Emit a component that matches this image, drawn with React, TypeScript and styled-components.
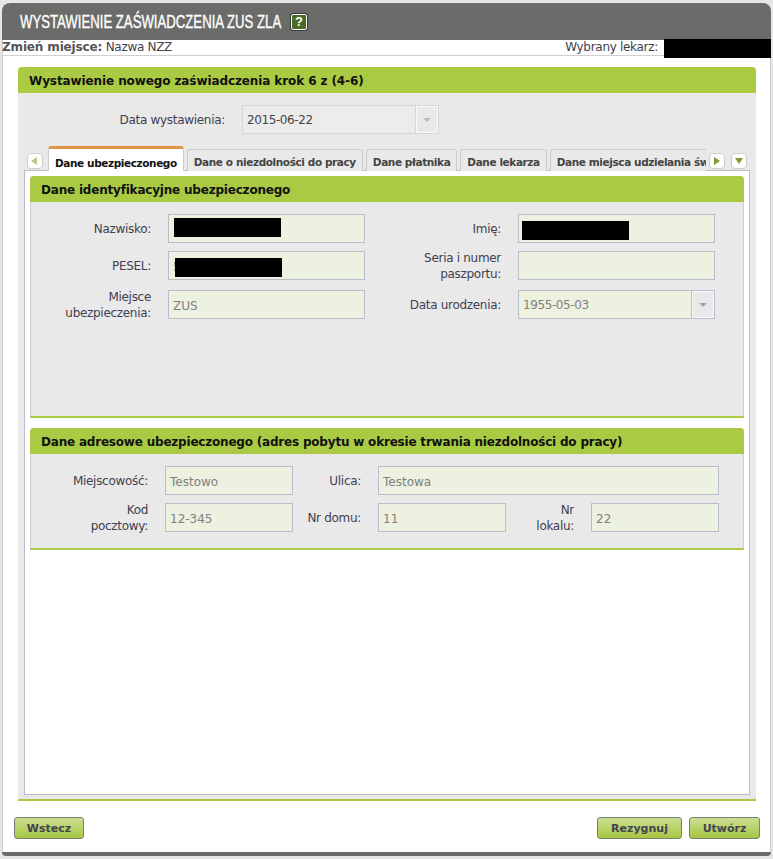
import React from "react";
import styled, { createGlobalStyle } from "styled-components";

const GlobalStyle = createGlobalStyle`
  html, body {
    margin: 0;
    padding: 0;
    background: #e6e6e6;
    font-family: "DejaVu Sans", Verdana, sans-serif;
    font-size: 12px;
    letter-spacing: -0.3px;
    color: #3f3f4f;
  }
`;

const Window = styled.div`
  box-sizing: border-box;
  width: 769px;
  height: 853px;
  margin: 3px 2px 3px 2px;
  background: #fff;
  border-left: 1px solid #cfcfcf;
  border-right: 1px solid #cfcfcf;
  border-radius: 8px 8px 6px 6px;
  display: flex;
  flex-direction: column;
  position: relative;
`;

const TitleBar = styled.div`
  height: 37px;
  margin: 0 -1px;
  background: #6b6c6a;
  border-radius: 8px 8px 0 0;
  display: flex;
  align-items: center;
  padding-left: 18px;
`;

const Title = styled.h1`
  margin: 0;
  width: 261px;
  white-space: nowrap;
  font-family: "Liberation Sans", Arial, sans-serif;
  font-size: 19px;
  font-weight: 400;
  letter-spacing: 0;
  color: #fff;
  display: inline-block;
  -webkit-text-stroke: 0.4px #fff;
  transform: scaleX(0.693);
  transform-origin: left center;
`;

const HelpIcon = styled.span`
  box-sizing: border-box;
  width: 16px;
  height: 16px;
  margin: 1px 0 0 10px;
  background: #4a6b24;
  border: 1px solid #fff;
  border-radius: 2px;
  box-shadow: 0 0 0 1px #3a3a3a;
  color: #fff;
  font-family: "Liberation Sans", Arial, sans-serif;
  font-weight: 700;
  font-size: 13px;
  letter-spacing: 0;
  line-height: 14px;
  text-align: center;
`;

const PlaceBar = styled.div`
  height: 15px;
  margin-left: -1px;
  border-bottom: 1px solid #cfcfcf;
  display: flex;
  justify-content: space-between;
  line-height: 15px;
  white-space: nowrap;
`;

const PlaceLabel = styled.b`
  letter-spacing: -0.15px;
  color: #555;
`;

const DoctorLabel = styled.span`
  margin-right: 107px;
  padding-right: 5px;
`;

const Redaction = styled.div<{ $left: number; $top: number; $height: number }>`
  position: absolute;
  left: ${(p) => p.$left}px;
  top: ${(p) => p.$top}px;
  width: 107px;
  height: ${(p) => p.$height}px;
  background: #000;
`;

const Main = styled.div`
  padding: 11px 11px 0 15px;
`;

const StepPanel = styled.section`
  box-sizing: border-box;
  width: 738px;
  height: 734px;
  background: #e9e9e9;
  border-bottom: 2px solid #aaca44;
  border-radius: 4px 4px 0 0;
`;

const PanelHeader = styled.h2`
  margin: 0;
  height: 26px;
  padding-left: 11px;
  background: #aaca44;
  border-radius: 4px 4px 0 0;
  color: #111;
  font-size: 12px;
  font-weight: 700;
  letter-spacing: -0.1px;
  line-height: 29px;
  white-space: nowrap;
`;

const DateRow = styled.div`
  display: flex;
  padding-top: 12px;
  height: 29px;
`;

const DateLabel = styled.label`
  width: 224px;
  padding-right: 17px;
  box-sizing: border-box;
  text-align: right;
  line-height: 31px;
`;

const Select = styled.div<{ $filled?: boolean; $width: number }>`
  box-sizing: border-box;
  width: ${(p) => p.$width}px;
  height: 29px;
  display: flex;
  background: ${(p) => (p.$filled ? "#edf1e0" : "#ececec")};
  border: 1px solid ${(p) => (p.$filled ? "#b8bccb" : "#d6d6d6")};
  color: ${(p) => (p.$filled ? "#808080" : "#444")};
`;

const SelectValue = styled.span`
  flex: 1;
  padding-left: 4px;
  letter-spacing: -0.4px;
  line-height: 29px;
`;

const SelectButton = styled.span<{ $filled?: boolean }>`
  box-sizing: border-box;
  width: 23px;
  background: #e9e9e9;
  border-left: 1px solid ${(p) => (p.$filled ? "#b8bccb" : "#d6d6d6")};
  box-shadow: inset 0 0 0 1px #f8f8f8;
  display: flex;
  align-items: center;
  justify-content: center;
`;

const TabStrip = styled.div`
  display: flex;
  align-items: flex-start;
  height: 25px;
  margin: 12px 0 -1px 9px;
  position: relative;
  z-index: 1;
`;

const ArrowButton = styled.button<{ $gap: number }>`
  box-sizing: border-box;
  width: 16px;
  height: 16px;
  margin: 7px 0 0 ${(p) => p.$gap}px;
  padding: 0;
  background: #fff;
  border: 1px solid #ccc;
  border-radius: 4px;
  display: flex;
  align-items: center;
  justify-content: center;
`;

const TabViewport = styled.div`
  width: 658px;
  height: 25px;
  margin-left: 5px;
  overflow: hidden;
  display: flex;
  align-items: flex-start;
  gap: 3px;
`;

const Tab = styled.div<{ $active?: boolean }>`
  box-sizing: border-box;
  flex: none;
  font-size: 10.5px;
  font-weight: 700;
  letter-spacing: -0.4px;
  white-space: nowrap;
  padding: 0 6px;
  border-radius: 3px 3px 0 0;
  margin-top: ${(p) => (p.$active ? 0 : 3)}px;
  height: ${(p) => (p.$active ? 25 : 22)}px;
  line-height: ${(p) => (p.$active ? 28 : 24)}px;
  background: ${(p) => (p.$active ? "#fff" : "#e9e9e9")};
  color: ${(p) => (p.$active ? "#111" : "#444")};
  border: 1px solid #ccc;
  border-bottom: none;
  border-top: ${(p) => (p.$active ? "3px solid #de9347" : "1px solid #ccc")};
`;

const TabContent = styled.div`
  box-sizing: border-box;
  width: 726px;
  height: 625px;
  margin-left: 6px;
  padding: 5px;
  background: #fff;
  border: 1px solid #b8bccb;
`;

const FormPanel = styled.section<{ $height: number }>`
  box-sizing: border-box;
  height: ${(p) => p.$height}px;
  margin-bottom: 10px;
  background: #e9e9e9;
  border: 1px solid #ccc;
  border-top: none;
  border-bottom: 2px solid #aaca44;
  border-radius: 4px 4px 0 0;
`;

const FormHeader = styled(PanelHeader)`
  margin: 0 -1px;
  letter-spacing: -0.2px;
`;

const IdentityGrid = styled.div`
  display: grid;
  grid-template-columns: 137px 197px 153px 197px;
  grid-template-rows: 37px 39px 29px;
  padding-top: 12px;
`;

const AddressGrid = styled.div`
  display: grid;
  grid-template-columns: 134px 128px 85px 128px 85px 128px;
  grid-template-rows: 37px 29px;
  padding-top: 12px;
`;

const FieldLabel = styled.label`
  box-sizing: border-box;
  height: 29px;
  padding: 1px 17px 0 0;
  display: flex;
  align-items: center;
  justify-content: flex-end;
  text-align: right;
  line-height: 16px;
`;

const Field = styled.div<{ $span?: number }>`
  box-sizing: border-box;
  height: 29px;
  grid-column: span ${(p) => p.$span ?? 1};
  padding-left: 4px;
  position: relative;
  background: #edf1e0;
  border: 1px solid #b8bccb;
  color: #808080;
  letter-spacing: 0;
  line-height: 30px;
`;

const Footer = styled.div`
  flex: 1;
  display: flex;
  align-items: flex-start;
  padding: 16px 10px 0 11px;
  gap: 7px;
`;

const Button = styled.button<{ $width: number }>`
  box-sizing: border-box;
  width: ${(p) => p.$width}px;
  height: 22px;
  padding: 0;
  background: linear-gradient(#cbdf96, #a6c640);
  border: 1px solid #7b7f72;
  border-radius: 3px;
  color: #43434f;
  font-family: inherit;
  font-size: 11px;
  font-weight: 700;
`;

const Spacer = styled.div`
  flex: 1;
`;

const BottomBar = styled.div`
  height: 4px;
  margin: 0 -1px;
  background: #6b6c6a;
  border-radius: 0 0 4px 4px;
`;

function Triangle(props: { direction: "left" | "right" | "down" | "caret"; color: string }): JSX.Element
{
  const points = {
    left: "7,1 7,9 1,5",
    right: "2,1 2,9 8,5",
    down: "1,2 9,2 5,8",
    caret: "1,3 9,3 5,7",
  }[props.direction];

  return (
    <svg width="10" height="10" viewBox="0 0 10 10">
      <polygon points={points} fill={props.color}/>
    </svg>
  );
}

const tabs = [
  "Dane ubezpieczonego",
  "Dane o niezdolności do pracy",
  "Dane płatnika",
  "Dane lekarza",
  "Dane miejsca udzielania świadczenia",
];

export default function App(): JSX.Element
{
  return (
    <Window>
      <GlobalStyle/>
      <TitleBar>
        <Title>WYSTAWIENIE ZAŚWIADCZENIA ZUS ZLA</Title>
        <HelpIcon>?</HelpIcon>
      </TitleBar>

      <PlaceBar>
        <span><PlaceLabel>Zmień miejsce:</PlaceLabel> Nazwa NZZ</span>
        <DoctorLabel>Wybrany lekarz:</DoctorLabel>
      </PlaceBar>
      <Redaction $left={661} $top={36} $height={19}/>

      <Main>
        <StepPanel>
          <PanelHeader>Wystawienie nowego zaświadczenia krok 6 z (4-6)</PanelHeader>

          <DateRow>
            <DateLabel>Data wystawienia:</DateLabel>
            <Select $width={197}>
              <SelectValue>2015-06-22</SelectValue>
              <SelectButton><Triangle direction="caret" color="#bbb"/></SelectButton>
            </Select>
          </DateRow>

          <TabStrip>
            <ArrowButton $gap={0}><Triangle direction="left" color="#b5c98a"/></ArrowButton>
            <TabViewport>
              {tabs.map((tab, index) => <Tab key={tab} $active={index === 0}>{tab}</Tab>)}
            </TabViewport>
            <ArrowButton $gap={3}><Triangle direction="right" color="#7f9a30"/></ArrowButton>
            <ArrowButton $gap={6}><Triangle direction="down" color="#7f9a30"/></ArrowButton>
          </TabStrip>

          <TabContent>
            <FormPanel $height={242}>
              <FormHeader>Dane identyfikacyjne ubezpieczonego</FormHeader>
              <IdentityGrid>
                <FieldLabel>Nazwisko:</FieldLabel>
                <Field><Redaction $left={5} $top={3} $height={19}/></Field>
                <FieldLabel>Imię:</FieldLabel>
                <Field><Redaction $left={3} $top={6} $height={19}/></Field>

                <FieldLabel>PESEL:</FieldLabel>
                <Field>5<Redaction $left={6} $top={6} $height={19}/></Field>
                <FieldLabel>Seria i numer<br/>paszportu:</FieldLabel>
                <Field/>

                <FieldLabel>Miejsce<br/>ubezpieczenia:</FieldLabel>
                <Field>ZUS</Field>
                <FieldLabel>Data urodzenia:</FieldLabel>
                <Select $width={197} $filled>
                  <SelectValue>1955-05-03</SelectValue>
                  <SelectButton $filled><Triangle direction="caret" color="#9aa6bd"/></SelectButton>
                </Select>
              </IdentityGrid>
            </FormPanel>

            <FormPanel $height={122}>
              <FormHeader>Dane adresowe ubezpieczonego (adres pobytu w okresie trwania niezdolności do pracy)</FormHeader>
              <AddressGrid>
                <FieldLabel>Miejscowość:</FieldLabel>
                <Field>Testowo</Field>
                <FieldLabel>Ulica:</FieldLabel>
                <Field $span={3}>Testowa</Field>

                <FieldLabel>Kod<br/>pocztowy:</FieldLabel>
                <Field>12-345</Field>
                <FieldLabel>Nr domu:</FieldLabel>
                <Field>11</Field>
                <FieldLabel>Nr<br/>lokalu:</FieldLabel>
                <Field>22</Field>
              </AddressGrid>
            </FormPanel>
          </TabContent>
        </StepPanel>
      </Main>

      <Footer>
        <Button $width={70}>Wstecz</Button>
        <Spacer/>
        <Button $width={85}>Rezygnuj</Button>
        <Button $width={71}>Utwórz</Button>
      </Footer>
      <BottomBar/>
    </Window>
  );
}
